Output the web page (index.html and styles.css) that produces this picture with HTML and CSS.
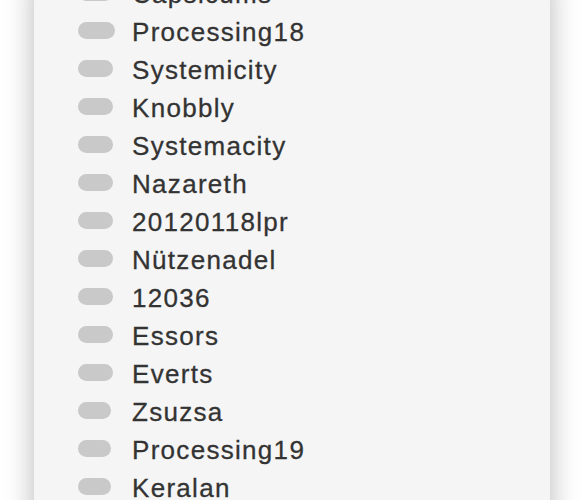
FILE: index.html
```html
<!DOCTYPE html>
<html lang="en">
<head>
    <meta charset="UTF-8">
    <meta name="viewport" content="width=device-width, initial-scale=1.0">
    <title>Tags</title>
    <link rel="stylesheet" href="styles.css">
</head>
<body>
    <div class="panel">
        <ul class="tag-list">
            <li><span class="pill"></span><span class="name">Capsicums</span></li>
            <li><span class="pill wide"></span><span class="name">Processing18</span></li>
            <li><span class="pill"></span><span class="name">Systemicity</span></li>
            <li><span class="pill"></span><span class="name">Knobbly</span></li>
            <li><span class="pill"></span><span class="name">Systemacity</span></li>
            <li><span class="pill"></span><span class="name">Nazareth</span></li>
            <li><span class="pill"></span><span class="name">20120118lpr</span></li>
            <li><span class="pill"></span><span class="name">Nützenadel</span></li>
            <li><span class="pill"></span><span class="name">12036</span></li>
            <li><span class="pill"></span><span class="name">Essors</span></li>
            <li><span class="pill"></span><span class="name">Everts</span></li>
            <li><span class="pill narrow"></span><span class="name">Zsuzsa</span></li>
            <li><span class="pill narrow"></span><span class="name">Processing19</span></li>
            <li><span class="pill narrow"></span><span class="name">Keralan</span></li>
        </ul>
    </div>
</body>
</html>
```

FILE: styles.css
```css
/* Page */
html, body {
    margin: 0;
    padding: 0;
    background-color: #ffffff;
    overflow: hidden;
}

body {
    font-family: "Liberation Sans", Arial, sans-serif;
    color: #333;
}

/* Panel (list is scrolled a little, so it starts above the window) */
.panel {
    width: 516px;
    margin: -25px 0 0 34px;
    min-height: 600px;
    background-color: #f5f5f5;
    box-shadow: 0 0 28px rgba(0, 0, 0, 0.28);
}

/* Tag rows */
.tag-list {
    list-style: none;
    margin: 0;
    padding: 0 0 0 44px;
}

.tag-list li {
    display: flex;
    align-items: flex-start;
    height: 38px;
}

.pill {
    flex: none;
    width: 35px;
    height: 17px;
    margin: 9px 19px 0 0;
    border-radius: 9px;
    background-color: #c9c9c9;
}

.pill.wide {
    width: 37px;
    margin-right: 17px;
}

.pill.narrow {
    width: 33px;
    margin-right: 21px;
}

.name {
    font-size: 26px;
    line-height: 38px;
    letter-spacing: 1.3px;
    -webkit-text-stroke: 0.3px #333;
}
```
